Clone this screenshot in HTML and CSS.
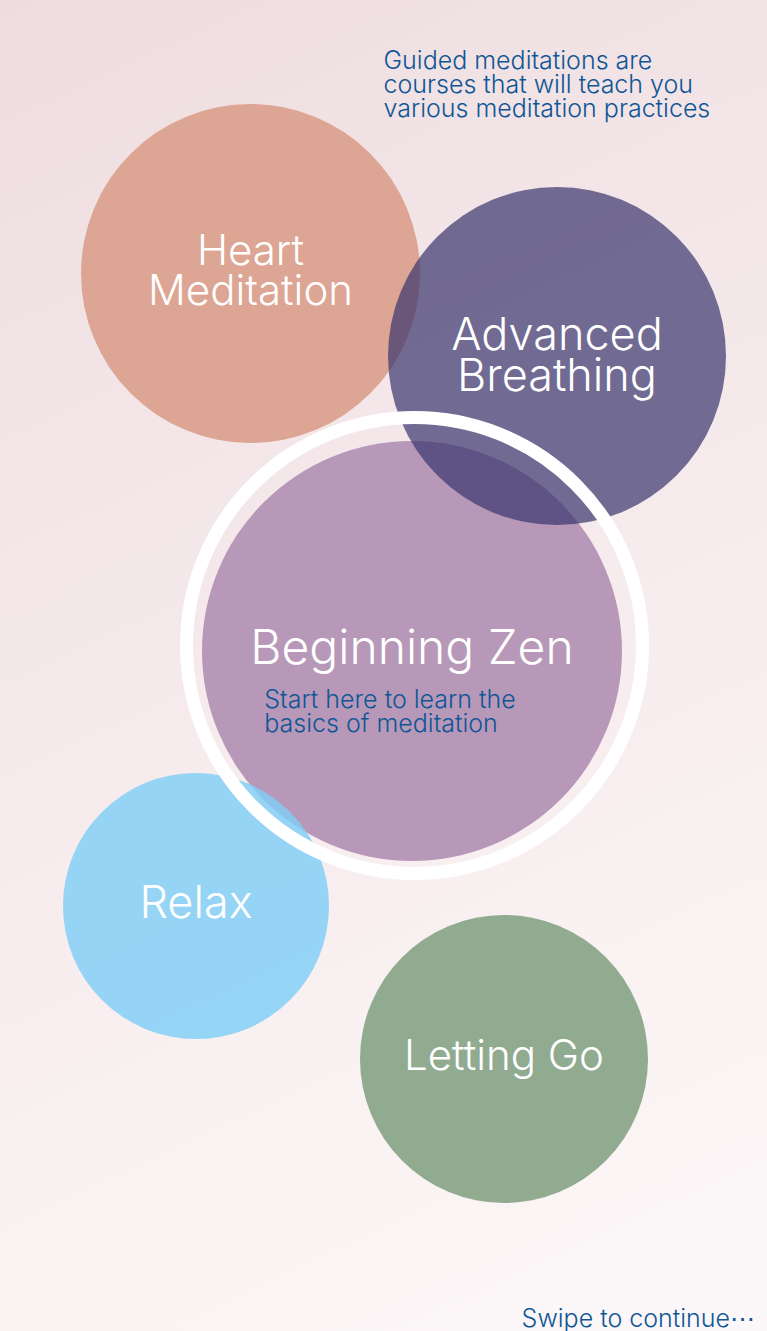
FILE: index.html
```html
<!DOCTYPE html>
<html lang="en">
<head>
<meta charset="utf-8">
<meta name="viewport" content="width=device-width, initial-scale=1">
<title>Guided meditations</title>
<link rel="stylesheet" href="styles.css">
</head>
<body>
<main class="screen">
  <p class="note intro">Guided meditations are<br>courses that will teach you<br>various meditation practices</p>
  <nav class="courses" aria-label="Courses">
    <button type="button" class="course heart">Heart<br>Meditation</button>
    <button type="button" class="course zen">
      <span class="zen-title">Beginning Zen</span>
      <span class="note zen-note">Start here to learn the<br>basics of meditation</span>
    </button>
    <button type="button" class="course breathing">Advanced<br>Breathing</button>
    <button type="button" class="course relax">Relax</button>
    <button type="button" class="course letting-go">Letting Go</button>
    <span class="ring" aria-hidden="true"></span>
  </nav>
  <p class="note swipe">Swipe to continue⋯</p>
</main>
</body>
</html>
```

FILE: styles.css
```css
* { box-sizing: border-box; }

body {
  margin: 0;
  font-family: "Century Gothic", Inter, "Liberation Sans", sans-serif;
  font-weight: 300;
}

.screen {
  min-height: 100vh;
  display: flex;
  flex-direction: column;
  background: linear-gradient(155deg, #eedddf 0%, #f3e5e8 30%, #f9f0f1 68%, #fcf8f9 100%);
}

.note {
  margin: 0;
  color: #0f5696;
  font-size: 25px;
  line-height: 24px;
}

.intro {
  margin-left: 50%;
  padding-top: 48px;
  white-space: nowrap;
}

.courses {
  position: relative;
  flex: 1;
  min-height: 1180px;
}

.course {
  position: absolute;
  display: flex;
  flex-direction: column;
  align-items: center;
  justify-content: center;
  aspect-ratio: 1;
  padding: 0 0 8px;
  border: 0;
  border-radius: 50%;
  color: #fff;
  font: inherit;
  font-size: 42px;
  line-height: 40px;
  cursor: pointer;
}

.heart {
  left: 81px;
  top: -16px;
  width: 339px;
  background: #dda593;
}

.breathing {
  left: 388px;
  top: 67px;
  width: 338px;
  padding-bottom: 4px;
  background: rgba(57, 53, 110, 0.7);
  font-size: 45px;
  line-height: 41px;
}

.zen {
  left: 202px;
  top: 321px;
  width: 420px;
  padding: 52px 0 0;
  background: #b798b8;
}

.zen-title {
  font-size: 48px;
  line-height: 56px;
}

.zen-note {
  margin-top: 12px;
  margin-right: 44px;
  text-align: left;
}

.relax {
  left: 63px;
  top: 653px;
  width: 266px;
  background: rgba(127, 206, 246, 0.82);
  font-size: 45px;
}

.letting-go {
  left: 360px;
  top: 795px;
  width: 288px;
  background: #90ab8f;
}

.ring {
  position: absolute;
  left: 180px;
  top: 291px;
  width: 469px;
  aspect-ratio: 1;
  border: 13px solid #fff;
  border-radius: 50%;
  pointer-events: none;
}

.swipe {
  align-self: flex-end;
  padding: 0 12px 1px 0;
}
```
